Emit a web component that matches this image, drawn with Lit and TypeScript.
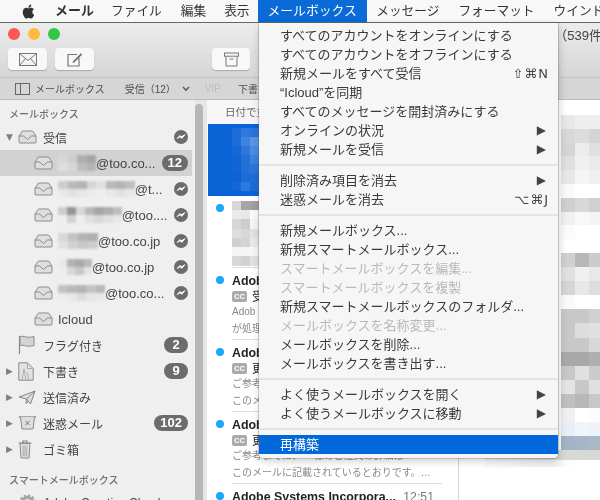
import { LitElement, html, css } from "lit";
import { customElement } from "lit/decorators.js";

const g = (v: number) => `rgb(${v},${v},${v})`;

const inbox = html`<svg class="ico" width="19" height="14" viewBox="0 0 19 14"><path d="M1 6 L4.5 1 H14.5 L18 6 V12 a1 1 0 0 1 -1 1 H2 a1 1 0 0 1 -1 -1 Z" fill="#dedede" stroke="#8b8b8b" stroke-width="1"/><path d="M1 6 H5.5 L9.5 9.5 L13.5 6 H18" fill="none" stroke="#8b8b8b" stroke-width="1"/></svg>`;
const flag = html`<svg class="ico" width="17" height="20" viewBox="0 0 17 20"><path d="M1.5 1 V19" stroke="#8b8b8b" stroke-width="1.2"/><path d="M2 1.5 C6 .5 9 3.5 16 1.5 V10.5 C9 12.5 6 9.5 2 10.5 Z" fill="#d4d4d4" stroke="#8b8b8b" stroke-width="1"/></svg>`;
const draft = html`<svg class="ico" width="16" height="19" viewBox="0 0 16 19"><path d="M.8 .8 H9.5 L15.2 6.5 V18.2 H.8 Z" fill="#e2e2e2" stroke="#8b8b8b"/><path d="M9.5 .8 V6.5 H15.2 M4 18 L6 7 M8 18 L6 7 M11 18 L9 10" fill="none" stroke="#a0a0a0" stroke-width=".8"/></svg>`;
const plane = html`<svg class="ico" width="18" height="15" viewBox="0 0 18 15"><path d="M1 7 L17 1 L12.5 14 L8.5 9 Z M8.5 9 L17 1 M8.5 9 L8 13.5 L10.5 11.5" fill="#dedede" stroke="#858585" stroke-linejoin="round"/></svg>`;
const junk = html`<svg class="ico" width="19" height="14" viewBox="0 0 19 14"><path d="M.8 1 H18.2" stroke="#8b8b8b" stroke-width="1.4"/><path d="M2.5 1 L4 13 H15 L16.5 1" fill="#dedede" stroke="#8b8b8b"/><path d="M7.5 5 L11.5 9 M11.5 5 L7.5 9" stroke="#777" stroke-width="1"/></svg>`;
const trash = html`<svg class="ico" width="14" height="19" viewBox="0 0 14 19"><path d="M.5 3 H13.5 M5 3 V1 H9 V3" fill="none" stroke="#858585" stroke-width="1.2"/><path d="M2 3.5 L3 18 H11 L12 3.5 Z" fill="#e2e2e2" stroke="#8b8b8b"/><path d="M5 5.5 L5.4 16.5 M7 5.5 V16.5 M9 5.5 L8.6 16.5" stroke="#9a9a9a" stroke-width=".8"/></svg>`;
const gear = html`<svg class="ico" width="19" height="19" viewBox="0 0 19 19"><circle cx="9.5" cy="9.5" r="6" fill="none" stroke="#a5a5a5" stroke-width="3"/><circle cx="9.5" cy="9.5" r="8" fill="none" stroke="#a5a5a5" stroke-width="2" stroke-dasharray="2.4 1.8"/></svg>`;
const status = html`<svg class="status" width="14" height="14" viewBox="0 0 14 14"><circle cx="7" cy="7" r="7" fill="#6c6c6c"/><path d="M3.2 8.6 L6 5.6 L7.8 7.6 L10.8 4.6 M3.2 8.6 L6 6.6 L7.8 8.4 L10.8 4.6" fill="#fff" stroke="#fff" stroke-width=".9" stroke-linejoin="round"/></svg>`;

const mosaic = (rows: number[][], w: number, h: number) => html`<span class="mosaic" style="grid-template-columns:repeat(${rows[0].length},${w}px);grid-auto-rows:${h}px">${rows.flat().map((v) => html`<i style="background:${g(v)}"></i>`)}</span>`;
const colorMosaic = (rows: string[][], w: number, h: number) => html`<span class="mosaic" style="grid-template-columns:repeat(${rows[0].length},${w}px);grid-auto-rows:${h}px">${rows.flat().map((v) => html`<i style="background:${v}"></i>`)}</span>`;

interface Row { name?: string; blur?: number[][]; blurW?: number; icon: unknown; tri?: string; child?: boolean; badge?: string; st?: boolean; sel?: boolean }
const rows: Row[] = [
  { name: "受信", icon: inbox, tri: "▼", st: true },
  { name: "@too.co...", blur: [[215, 205, 175, 165], [222, 215, 190, 180]], blurW: 9.5, icon: inbox, child: true, badge: "12", sel: true },
  { name: "@t...", blur: [[205, 185, 180, 215, 225, 185, 180, 190], [232, 225, 230, 235, 238, 232, 225, 232]], blurW: 9.6, icon: inbox, child: true, st: true },
  { name: "@too....", blur: [[205, 150, 215, 185, 165, 175, 190], [238, 210, 238, 225, 215, 225, 230]], blurW: 9.1, icon: inbox, child: true, st: true },
  { name: "@too.co.jp", blur: [[215, 195, 180, 175], [225, 210, 200, 205]], blurW: 10, icon: inbox, child: true, st: true },
  { name: "@too.co.jp", blur: [[232, 180, 170, 185], [238, 215, 200, 228]], blurW: 8.5, icon: inbox, child: true, st: true },
  { name: "@too.co...", blur: [[195, 185, 180, 195, 185], [236, 232, 220, 230, 232]], blurW: 9.4, icon: inbox, child: true, st: true },
  { name: "Icloud", icon: inbox, child: true },
  { name: "フラグ付き", icon: flag, badge: "2" },
  { name: "下書き", icon: draft, tri: "▶", badge: "9" },
  { name: "送信済み", icon: plane, tri: "▶" },
  { name: "迷惑メール", icon: junk, tri: "▶", badge: "102" },
  { name: "ゴミ箱", icon: trash, tri: "▶" },
];

type MI = { t: string; d?: boolean; k?: string; a?: boolean; hi?: boolean } | null;
const menu: MI[] = [
  { t: "すべてのアカウントをオンラインにする" },
  { t: "すべてのアカウントをオフラインにする" },
  { t: "新規メールをすべて受信", k: "⇧⌘N" },
  { t: "“Icloud”を同期" },
  { t: "すべてのメッセージを開封済みにする" },
  { t: "オンラインの状況", a: true },
  { t: "新規メールを受信", a: true },
  null,
  { t: "削除済み項目を消去", a: true },
  { t: "迷惑メールを消去", k: "⌥⌘J" },
  null,
  { t: "新規メールボックス..." },
  { t: "新規スマートメールボックス..." },
  { t: "スマートメールボックスを編集...", d: true },
  { t: "スマートメールボックスを複製", d: true },
  { t: "新規スマートメールボックスのフォルダ..." },
  { t: "メールボックスを名称変更...", d: true },
  { t: "メールボックスを削除..." },
  { t: "メールボックスを書き出す..." },
  null,
  { t: "よく使うメールボックスを開く", a: true },
  { t: "よく使うメールボックスに移動", a: true },
  null,
  { t: "再構築", hi: true },
];

const detailA = [
  [232, 238, 238], [216, 221, 213], [213, 236, 224], [224, 240, 234], [232, 245, 240], [250, 255, 255],
  [208, 216, 208], [240, 248, 244], [252, 255, 255], [255, 255, 255],
];
const detailB = [
  [208, 184, 204], [224, 240, 232], [213, 232, 221], [250, 255, 255], [200, 200, 208], [200, 221, 224], [200, 200, 216],
  [168, 168, 176], [200, 224, 204], [228, 200, 224], [192, 184, 200], [240, 255, 252],
];

const blueM = [
  ["#1c6cd8", "#2f78dc", "#2a74dc"],
  ["#1c6cd8", "#3b84e0", "#5a94e4"],
  ["#1668d6", "#2c76dc", "#4a8ce2"],
  ["#1264d4", "#2270da", "#3a82de"],
  ["#1264d4", "#2070d8", "#2a76da"],
  ["#0e62d4", "#1a6cd8", "#1e6ed8"],
  ["#1468d6", "#3078dc", "#1c6cd8"],
];
const grayM = [
  [215, 165, 160], [235, 232, 250], [215, 205, 245], [222, 215, 225], [208, 212, 232], [245, 245, 245], [215, 210, 225],
];

const adobe = (title: string, cc: string, l1: string, l2: string, time = "") => html`
  <div class="msg">
    <div class="dot"></div>
    <div class="msg-body">
      <div class="from"><b>${title}</b><span class="time">${time}</span></div>
      <div class="sub"><span class="cc">CC</span><span>${cc}</span></div>
      <div class="pre">${l1}</div>
      <div class="pre">${l2}</div>
    </div>
  </div>`;

@customElement("app-root")
export class AppRoot extends LitElement {
  static styles = css`
    :host { display: block; position: relative; width: 600px; height: 500px; overflow: hidden; background: #fff; filter: blur(0.35px);
      font-family: "Liberation Sans", "Noto Sans CJK JP", sans-serif; color: #333; font-size: 13px; }
    .menubar { display: flex; height: 22px; background: #f8f8f8; border-bottom: 1px solid #5d6e68; box-sizing: content-box; align-items: stretch; }
    .apple { width: 50px; flex: none; display: flex; align-items: center; padding-left: 20px; box-sizing: border-box; }
    .mb { flex: none; padding: 0 9.5px; display: flex; align-items: center; line-height: 22px; font-size: 12.7px; white-space: nowrap; }
    .mb.bold { font-weight: 700; padding: 0 7.5px 0 5px; font-size: 13px; }
    .mb.tight { padding-right: 8.5px; }
    .mb.on { background: #0a6ad8; color: #fff; padding: 0 10px; margin-left: -.5px; font-size: 12.8px; }
    .win { background: #fff; }
    .titlebar { height: 54px; background: linear-gradient(#ececec, #d6d6d6); display: flex; flex-direction: column; }
    .title-row { display: flex; height: 25px; padding: 0 0 3px 8px; box-sizing: border-box; align-items: center; gap: 8px; }
    .light { width: 12px; height: 12px; border-radius: 50%; flex: none; }
    .title { margin-left: 479px; white-space: nowrap; font-size: 13px; color: #444; flex: none; }
    .tools { display: flex; padding-left: 8px; gap: 8px; align-items: flex-start; }
    .tbtn { width: 39px; height: 22px; background: #f8f8f8; border-radius: 4px; box-shadow: 0 1px 1px rgba(0,0,0,.22); display: flex; align-items: center; justify-content: center; }
    .tbtn.arch { margin-left: 110px; width: 38px; }
    .fav { height: 23px; background: #d6d6d6; border-top: 1px solid #c6c6c6; border-bottom: 1px solid #bdbdbd; box-sizing: border-box; display: flex; align-items: center; font-size: 10px; color: #4d4d4d; white-space: nowrap; padding-left: 15px; }
    .fav .lbl { margin-left: 5px; }
    .fav .inb { margin-left: 20px; }
    .fav .chev { margin-left: 6px; }
    .fav .vip { margin-left: 15px; color: #bcbcbc; }
    .fav .dr { margin-left: 17px; }
    .main { display: flex; height: 400px; }
    .side { width: 195px; background: #efefef; flex: none; overflow: hidden; padding-top: 4px; box-sizing: border-box; }
    .sec { height: 20px; padding-left: 9px; font-size: 10px; color: #6f6f6f; line-height: 22px; font-weight: 500; }
    .row { height: 26px; display: flex; align-items: center; font-size: 12px; color: #444; padding-right: 4px; white-space: nowrap; margin-right: 3px; box-sizing: border-box; }
    .row.child { font-size: 13px; }
    .row.sel { background: #d2d2d2; }
    .tri { width: 18px; flex: none; padding-left: 6px; box-sizing: border-box; font-size: 9px; color: #808080; font-family: "DejaVu Sans", sans-serif; }
    .slot { width: 25px; flex: none; display: flex; align-items: center; }
    .row.child .slot { width: 24px; }
    .row.child .tri { width: 34px; }
    .nm { display: flex; align-items: center; flex: 1; min-width: 0; }
    .nm .mosaic { filter: blur(1px); }
    .status { flex: none; }
    .badge { flex: none; background: #6c6c6c; color: #fff; font-weight: 700; font-size: 13px; height: 16px; line-height: 16px; border-radius: 8px; padding: 0 6px; min-width: 12px; text-align: center; }
    .smart { margin-top: 7px; height: 21px; line-height: 24px; }
    .scroll { width: 12px; flex: none; background: #e6e6e6; display: flex; box-sizing: border-box; }
    .thumb { width: 8px; background: #b7b7b7; border-radius: 4px 4px 0 0; margin-top: 4px; }
    .list { width: 251px; flex: none; background: #fff; overflow: hidden; border-right: 1px solid #d5d5d5; box-sizing: content-box; }
    .lhead { height: 24px; line-height: 25px; padding-left: 18px; font-size: 10.5px; color: #666; background: #f6f6f6; white-space: nowrap; }
    .selrow { height: 72px; background: #0a64d6; padding: 4px 0 0 24px; box-sizing: border-box; display: flex; margin-left: 1px; }
    .first { height: 71px; display: flex; overflow: hidden; }
    .first .dotw { width: 25px; flex: none; }
    .first .dotw .dot { margin: 8px 0 0 9px; }
    .first .mw { padding-top: 2px; }
    .msg { display: flex; height: 72px; overflow: hidden; }
    .dot { width: 8px; height: 8px; border-radius: 50%; background: #1ba6ff; flex: none; margin: 9px 0 0 9px; }
    .msg-body { margin-left: 8px; width: 210px; padding: 5px 8px 0 0; flex: none; border-top: 1px solid #dedede; box-sizing: border-box; }
    .from { display: flex; justify-content: space-between; font-size: 12.4px; color: #222; line-height: 16px; white-space: nowrap; }
    .from b { font-weight: 700; }
    .time { color: #777; font-size: 12.3px; }
    .sub { display: flex; align-items: center; gap: 5px; font-size: 12px; line-height: 16px; color: #222; height: 15px; white-space: nowrap; }
    .cc { width: 15px; height: 11px; line-height: 11px; background: #aaa; color: #fff; border-radius: 2px; font-size: 7.5px; font-weight: 700; text-align: center; flex: none; }
    .pre { font-size: 10px; line-height: 16.5px; color: #888; white-space: nowrap; overflow: hidden; }
    .detail { flex: 1; background: #fff; padding: 15px 0 0 102px; display: flex; flex-direction: column; align-items: flex-start; min-width: 0; overflow: hidden; }
    .mosaic { display: inline-grid; flex: none; }
    .mosaic i { display: block; }
    .strip { margin-left: -76px; height: 10px; width: 120px; background: linear-gradient(90deg, #f4f1ea, #d8d8d4 60%); flex: none; }
    .strip2 { margin-left: -76px; height: 7px; width: 90px; background: linear-gradient(90deg, #fbfbfb, #eef1f5 70%, #fff); flex: none; }
    .menu { position: absolute; left: 259px; top: 23px; width: 299px; height: 435px; box-sizing: border-box; background: #f6f6f6; padding-top: 2.5px; border-radius: 0 0 4px 4px; box-shadow: 0 0 0 .5px rgba(90,90,90,.5), 1px 3px 8px rgba(0,0,0,.2); }
    .mi { height: 19px; line-height: 19px; padding: 0 9px 0 21px; display: flex; justify-content: space-between; align-items: center; font-size: 13px; color: #3a3a3a; white-space: nowrap; }
    .mi.d { color: #b9b9b9; }
    .mi.hi { background: #0068da; color: #fff; }
    .key { font-family: "DejaVu Sans", "Liberation Sans", sans-serif; font-size: 13px; letter-spacing: 1px; color: #444; }
    .arr { font-size: 12px; margin-right: 3px; color: #444; font-family: "DejaVu Sans", sans-serif; }
    .sep { height: 2px; background: #e4e4e4; margin: 5px 0; }
  `;

  render() {
    return html`
      <div class="menubar">
        <div class="apple"><svg width="17" height="17" viewBox="0 0 24 24"><path fill="#333" d="M18.71 19.5c-.83 1.24-1.71 2.45-3.05 2.47-1.34.03-1.77-.79-3.29-.79-1.53 0-2 .77-3.27.82-1.31.05-2.3-1.32-3.14-2.53C4.25 17 2.94 12.45 4.7 9.39c.87-1.52 2.43-2.48 4.12-2.51 1.28-.02 2.5.87 3.29.87.78 0 2.26-1.07 3.81-.91.65.03 2.47.26 3.64 1.98-.09.06-2.17 1.28-2.15 3.81.03 3.02 2.65 4.03 2.68 4.04-.03.07-.42 1.44-1.38 2.83M13 3.5c.73-.83 1.94-1.46 2.94-1.5.13 1.17-.34 2.35-1.04 3.19-.69.85-1.83 1.51-2.95 1.42-.15-1.15.41-2.35 1.05-3.11z"/></svg></div>
        <div class="mb bold">メール</div><div class="mb">ファイル</div><div class="mb tight">編集</div><div class="mb tight">表示</div>
        <div class="mb on">メールボックス</div><div class="mb">メッセージ</div><div class="mb">フォーマット</div><div class="mb">ウインド</div>
      </div>
      <div class="win">
        <div class="titlebar">
          <div class="title-row">
            <span class="light" style="background:#fc5753"></span><span class="light" style="background:#fdbc40"></span><span class="light" style="background:#33c748"></span>
            <span class="title">p（539件</span>
          </div>
          <div class="tools">
            <div class="tbtn"><svg width="18" height="13" viewBox="0 0 18 13"><rect x=".5" y=".5" width="17" height="12" fill="#f4f4f4" stroke="#777"/><path d="M.5 .5 L9 7.5 L17.5 .5 M.5 12.5 L6.5 5.5 M17.5 12.5 L11.5 5.5" fill="none" stroke="#777"/></svg></div>
            <div class="tbtn"><svg width="16" height="15" viewBox="0 0 16 15"><path d="M10 2.5 H1 V14 H12 V6" fill="none" stroke="#777" stroke-width="1.2"/><path d="M6 9.5 L14 1.2 L15.2 2.4 L7.2 10.5 L5.5 11 Z" fill="#666"/></svg></div>
            <div class="tbtn arch"><svg width="15" height="15" viewBox="0 0 15 15"><rect x=".5" y="1" width="14" height="3.2" fill="none" stroke="#777"/><path d="M2 4.5 V14 H13 V4.5 M5.5 7 H9.5" fill="none" stroke="#777"/></svg></div>
          </div>
        </div>
        <div class="fav">
          <svg width="15" height="12" viewBox="0 0 15 12"><rect x=".5" y=".5" width="14" height="11" fill="none" stroke="#666"/><path d="M5.5 .5 V11.5" stroke="#666"/></svg>
          <span class="lbl">メールボックス</span><span class="inb">受信（12）</span>
          <svg class="chev" width="8" height="6" viewBox="0 0 8 6"><path d="M1 1 L4 4.2 L7 1" fill="none" stroke="#555" stroke-width="1.4"/></svg>
          <span class="vip">VIP</span><span class="dr">下書</span>
        </div>
        <div class="main">
          <div class="side">
            <div class="sec">メールボックス</div>
            ${rows.map((r) => html`
              <div class="row ${r.child ? "child" : ""} ${r.sel ? "sel" : ""}">
                <span class="tri">${r.tri ?? ""}</span>
                <span class="slot">${r.icon}</span>
                <span class="nm">${r.blur ? mosaic(r.blur, r.blurW!, 8) : ""}${r.name}</span>
                ${r.badge ? html`<span class="badge">${r.badge}</span>` : ""}
                ${r.st ? status : ""}
              </div>`)}
            <div class="sec smart">スマートメールボックス</div>
            <div class="row"><span class="tri"></span><span class="slot">${gear}</span><span class="nm">Adobe Creative Cloud</span></div>
          </div>
          <div class="scroll"><div class="thumb"></div></div>
          <div class="list">
            <div class="lhead">日付で並</div>
            <div class="selrow">${colorMosaic(blueM, 9, 9)}</div>
            <div class="first"><div class="dotw"><div class="dot"></div></div><div class="mw">${mosaic(grayM, 9, 9.3)}</div></div>
            ${adobe("Adob", "受", "Adob", "が処理")}
            ${adobe("Adob", "更", "ご参考", "このメ")}
            ${adobe("Adob", "更", "ご参考までに、○○様のご注文の詳細は", "このメールに記載されているとおりです。…")}
            ${adobe("Adobe Systems Incorpora...", "", "", "", "12:51")}
          </div>
          <div class="detail">
            ${mosaic(detailA, 14, 13.8)}
            ${mosaic(detailB, 14, 14.1)}
            ${colorMosaic([["#e8eff7", "#f0f5fc", "#eef3fa"], ["#a5b3c6", "#a8b4c8", "#aab8c8"]], 14, 14)}
            <div class="strip"></div>
            <div class="strip2"></div>
          </div>
        </div>
      </div>
      <div class="menu">
        ${menu.map((m) => m === null ? html`<div class="sep"></div>` : html`
          <div class="mi ${m.d ? "d" : ""} ${m.hi ? "hi" : ""}">
            <span>${m.t}</span>
            ${m.k ? html`<span class="key">${m.k}</span>` : ""}
            ${m.a ? html`<span class="arr">▶</span>` : ""}
          </div>`)}
      </div>
    `;
  }
}
